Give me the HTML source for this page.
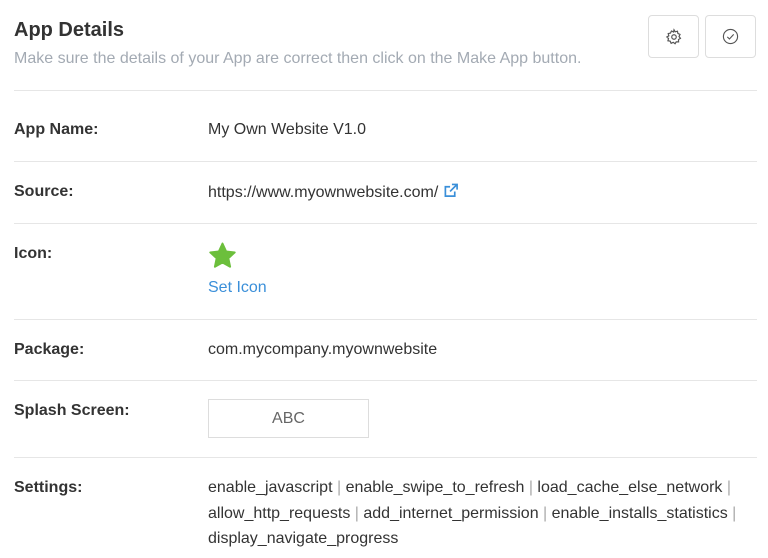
<!DOCTYPE html>
<html><head><style>
body{margin:0;width:768px;height:558px;background:#fff;font-family:"Liberation Sans",sans-serif;position:relative;overflow:hidden;color:#333}
.a{position:absolute}
.t{left:14px;top:19px;font-size:20px;font-weight:bold;color:#333}
.s{left:14px;top:50px;font-size:16px;color:#a3aab3}
.ln{left:14px;width:743px;height:1px;background:#e6e6e6}
.lb{left:14px;font-size:16px;font-weight:bold;color:#333}
.v{left:208px;font-size:16px;color:#333}
.btn{top:15px;width:51px;height:43px;border:1px solid #ddd;border-radius:4px;box-sizing:border-box;display:flex;align-items:center;justify-content:center}
.sep{color:#aaa}
</style></head><body>
<div class="a t">App Details</div>
<div class="a s">Make sure the details of your App are correct then click on the Make App button.</div>
<div class="a btn" style="left:648px"><svg width="18" height="18" viewBox="0 0 24 24" fill="none" stroke="#555" stroke-width="1.6"><circle cx="12" cy="12" r="3"/><path d="M12 2.5l1.6 2.6 3-.8.6 3 2.8 1.3-1.3 2.8 1.9 2.4-2.6 1.6.1 3.1-3.1-.1-1.6 2.6-2.4-1.9-2.8 1.3-1.3-2.8-3-.6.8-3L2.5 12l2.6-1.6-.8-3 3-.6 1.3-2.8 2.8 1.3z"/></svg></div>
<div class="a btn" style="left:705px"><svg width="17" height="17" viewBox="0 0 24 24" fill="none" stroke="#555" stroke-width="1.6"><circle cx="12" cy="12" r="10"/><path d="M7.5 12.5l3 3 6-6.5"/></svg></div>
<div class="a ln" style="top:90px"></div>
<div class="a lb" style="top:121px">App Name:</div><div class="a v" style="top:121px">My Own Website V1.0</div>
<div class="a ln" style="top:161px"></div>
<div class="a lb" style="top:183px">Source:</div><div class="a v" style="top:183px">https://www.myownwebsite.com/ <svg width="16" height="15" viewBox="0 0 16 16" style="vertical-align:-1px" fill="none" stroke="#3a8fd9" stroke-width="1.8"><path d="M12 9v5H2V4h5"/><path d="M9 1.5h5.5V7M14.5 1.5L7 9"/></svg></div>
<div class="a ln" style="top:223px"></div>
<div class="a lb" style="top:245px">Icon:</div>
<svg class="a" style="left:207px;top:241px" width="31" height="30" viewBox="0 0 24 24"><path fill="#6cbf3c" stroke="#6cbf3c" stroke-width="1.5" stroke-linejoin="round" d="M12 2l2.9 6.3 6.9.8-5.1 4.7 1.4 6.8L12 17.2l-6.1 3.4 1.4-6.8-5.1-4.7 6.9-.8z"/></svg>
<div class="a v" style="top:279px;color:#3a8fd9">Set Icon</div>
<div class="a ln" style="top:319px"></div>
<div class="a lb" style="top:341px">Package:</div><div class="a v" style="top:341px">com.mycompany.myownwebsite</div>
<div class="a ln" style="top:380px"></div>
<div class="a lb" style="top:402px">Splash Screen:</div>
<div class="a" style="left:208px;top:399px;width:161px;height:39px;border:1px solid #ddd;box-sizing:border-box;text-align:center;line-height:37px;font-size:16px;color:#666">ABC</div>
<div class="a ln" style="top:457px"></div>
<div class="a lb" style="top:479px">Settings:</div>
<div class="a v" style="top:475px;width:560px;line-height:25.5px">enable_javascript <span class="sep">|</span> enable_swipe_to_refresh <span class="sep">|</span> load_cache_else_network <span class="sep">|</span><br>allow_http_requests <span class="sep">|</span> add_internet_permission <span class="sep">|</span> enable_installs_statistics <span class="sep">|</span><br>display_navigate_progress</div>
</body></html>
